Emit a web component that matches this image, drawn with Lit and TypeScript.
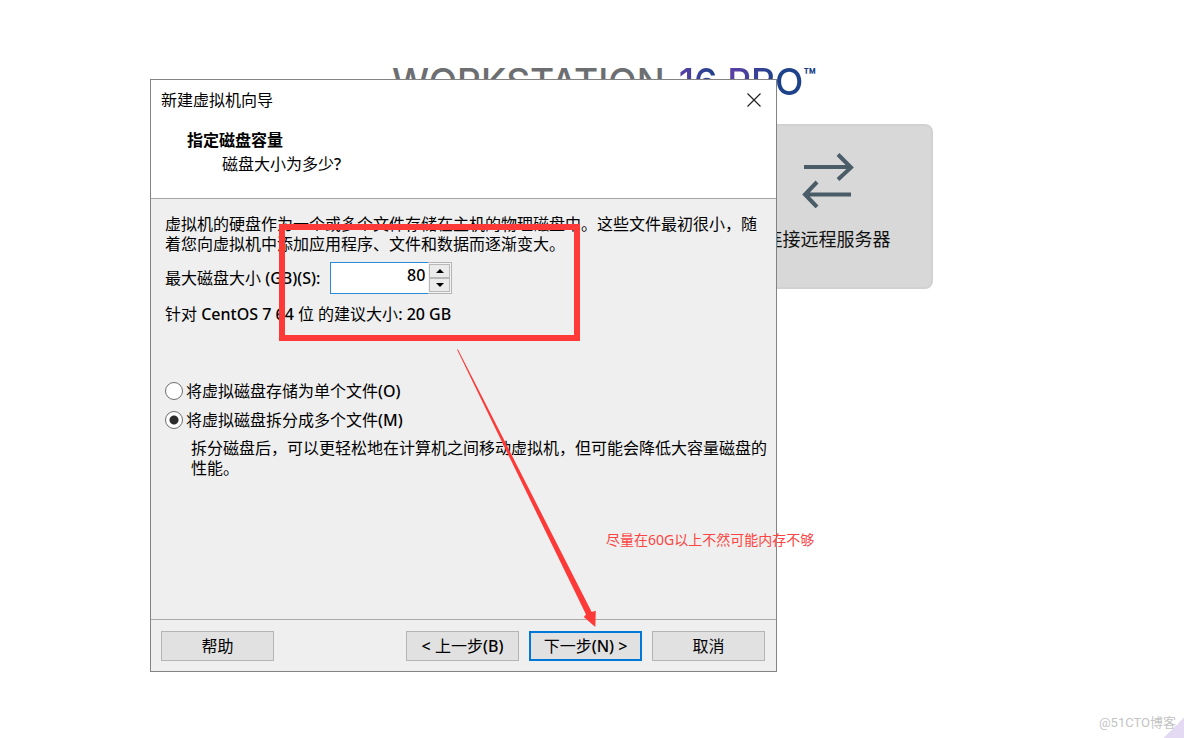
import { LitElement, html, css, svg } from "lit";
import { customElement, state } from "lit/decorators.js";

@customElement("workstation-home")
class WorkstationHome extends LitElement {
  static styles = css`
    :host {
      display: block;
      padding: 58px 0 0 24px;
    }
    .stage {
      display: flex;
      flex-direction: column;
      align-items: center;
      gap: 18px;
    }
    .logo {
      display: flex;
      align-items: flex-start;
      gap: 14px;
      margin: 0;
      font: 500 37px/48px Inter, sans-serif;
      color: #6d6e71;
      white-space: nowrap;
    }
    .edition {
      display: flex;
      align-items: flex-start;
    }
    .grad {
      background: linear-gradient(90deg, #5a3fa5, #1d428a 30%, #5a3fa5 42%, #1d428a 80%);
      background-clip: text;
      -webkit-background-clip: text;
      color: transparent;
    }
    .tm {
      font-size: 20px;
      font-weight: 700;
      line-height: 36px;
      color: #1d428a;
    }
    .tiles {
      display: flex;
      justify-content: flex-end;
      width: 100%;
      max-width: 657px;
    }
    .tile {
      display: flex;
      flex-direction: column;
      align-items: center;
      gap: 16px;
      width: 210px;
      height: 165px;
      padding: 24px 0 0;
      border: 2px solid #d1d1d1;
      border-radius: 8px;
      background: #d8d8d8;
      color: #111;
      font: 18px/28px "Noto Sans CJK SC", sans-serif;
    }
  `;
  render() {
    return html`
      <div class="stage">
        <h1 class="logo">
          <span>WORKSTATION</span>
          <span class="edition"><span class="grad">16 PRO</span><span class="tm">™</span></span>
        </h1>
        <div class="tiles">
          <button class="tile">
            <svg width="52" height="58" viewBox="0 0 52 58" fill="none" stroke="#4a5c68" stroke-width="4">
              <path d="M2 17H49M36 4.500L49 17.500L36 29.500M49 44.500H3M15 32L3 44.500L15 57" />
            </svg>
            <span>连接远程服务器</span>
          </button>
        </div>
      </div>
    `;
  }
}

@customElement("disk-wizard")
class DiskWizard extends LitElement {
  @state() private size = 80;
  @state() private mode = "split";

  static styles = css`
    :host {
      display: flex;
      flex-direction: column;
      box-sizing: border-box;
      border: 1px solid #838383;
      background: #efefef;
      color: #000;
      font: 16px/20px "Noto Sans", "Noto Sans CJK SC", sans-serif;
    }
    * {
      box-sizing: border-box;
    }
    h2,
    h3,
    p {
      margin: 0;
      font-size: 16px;
      font-weight: 400;
    }
    b {
      font-weight: 500;
    }
    .head {
      padding: 10px 11px 24px 10px;
      background: #fff;
      border-bottom: 1px solid #a5a5a5;
    }
    .bar {
      display: flex;
      justify-content: space-between;
      align-items: center;
      height: 20px;
    }
    .close {
      display: flex;
      padding: 2px;
      border: 0;
      background: none;
    }
    .head h3 {
      padding: 20px 0 0 26px;
      font-weight: 700;
    }
    .head p {
      padding: 4px 0 0 61px;
    }
    .body {
      padding: 15px 8px 141px 14px;
    }
    .row {
      display: flex;
      align-items: center;
      gap: 10px;
      padding: 8px 0 10px;
    }
    .spin {
      display: flex;
      width: 122px;
      height: 32px;
    }
    .spin input {
      flex: 1;
      min-width: 0;
      padding: 0 3px 6px;
      border: 1px solid #2b8ad6;
      border-right: 0;
      border-radius: 0;
      outline: 0;
      background: #fff;
      color: #000;
      font: inherit;
      font-weight: 500;
      text-align: right;
    }
    .arrows {
      display: flex;
      flex-direction: column;
      width: 24px;
      padding: 1px;
      border: 1px solid #b4b4b4;
      border-left: 0;
      background: #f4f4f4;
    }
    .arrows button {
      display: flex;
      flex: 1;
      align-items: center;
      justify-content: center;
      padding: 0;
      border: 1px solid #b8b8b8;
      background: #ebebeb;
    }
    .options {
      display: flex;
      flex-direction: column;
      gap: 9px;
      padding-top: 57px;
    }
    .options label {
      display: flex;
      align-items: center;
      gap: 3px;
    }
    .options input {
      appearance: none;
      width: 18px;
      height: 18px;
      margin: 0;
      border: 1px solid #6e6e6e;
      border-radius: 50%;
      background: #fff;
    }
    .options input:checked {
      background: radial-gradient(circle, #2b2b2b 4px, #fff 5px);
    }
    .hint {
      padding: 8px 0 0 26px;
    }
    .foot {
      display: flex;
      gap: 10px;
      padding: 11px 11px 10px 10px;
      border-top: 1px solid #a9a9a9;
    }
    .foot button {
      width: 113px;
      height: 30px;
      padding: 0;
      border: 1px solid #b4b4b4;
      background: #e1e1e1;
      color: #000;
      font: inherit;
    }
    .foot .help {
      margin-right: auto;
    }
    .foot .next {
      border: 2px solid #0078d7;
    }
  `;
  private arrow(d: string) {
    return html`<svg width="8" height="4" viewBox="0 0 8 4">${svg`<path d=${d} />`}</svg>`;
  }
  render() {
    return html`
      <div class="head">
        <div class="bar">
          <h2>新建虚拟机向导</h2>
          <button class="close" aria-label="关闭">
            <svg width="18" height="18" viewBox="0 0 18 18" stroke="#222" stroke-width="1.200">
              <path d="M2.500 2.500L15.500 15.500M15.500 2.500L2.500 15.500" />
            </svg>
          </button>
        </div>
        <h3>指定磁盘容量</h3>
        <p>磁盘大小为多少<b>?</b></p>
      </div>
      <div class="body">
        <p>虚拟机的硬盘作为一个或多个文件存储在主机的物理磁盘中。这些文件最初很小，随着您向虚拟机中添加应用程序、文件和数据而逐渐变大。</p>
        <div class="row">
          <label for="size">最大磁盘大小 <b>(GB)(S):</b></label>
          <div class="spin">
            <input id="size" type="text" inputmode="numeric" .value=${String(this.size)}
              @change=${(e: Event) => (this.size = Number((e.target as HTMLInputElement).value) || 1)} />
            <div class="arrows">
              <button aria-label="增加" @click=${() => this.size++}>${this.arrow("M0 4L4 0L8 4Z")}</button>
              <button aria-label="减少" @click=${() => (this.size = Math.max(1, this.size - 1))}>${this.arrow("M0 0L4 4L8 0Z")}</button>
            </div>
          </div>
        </div>
        <p>针对 <b>CentOS 7 64</b> 位 的建议大小<b>: 20 GB</b></p>
        <div class="options">
          <label>
            <input type="radio" name="mode" ?checked=${this.mode === "single"} @change=${() => (this.mode = "single")} />
            <span>将虚拟磁盘存储为单个文件<b>(O)</b></span>
          </label>
          <label>
            <input type="radio" name="mode" ?checked=${this.mode === "split"} @change=${() => (this.mode = "split")} />
            <span>将虚拟磁盘拆分成多个文件<b>(M)</b></span>
          </label>
        </div>
        <p class="hint">拆分磁盘后，可以更轻松地在计算机之间移动虚拟机，但可能会降低大容量磁盘的性能。</p>
      </div>
      <div class="foot">
        <button class="help">帮助</button>
        <button><b>&lt;</b> 上一步<b>(B)</b></button>
        <button class="next">下一步<b>(N) &gt;</b></button>
        <button>取消</button>
      </div>
    `;
  }
}

@customElement("app-root")
class AppRoot extends LitElement {
  static styles = css`
    :host {
      display: block;
      position: relative;
      min-height: 100vh;
      overflow: hidden;
      background: #fff;
    }
    .wizard {
      position: absolute;
      left: 150px;
      top: 79px;
      width: 627px;
    }
    .frame {
      position: absolute;
      left: 279px;
      top: 224px;
      width: 301px;
      height: 117px;
      box-sizing: border-box;
      border: 6px solid #fd3a38;
    }
    .pointer {
      position: absolute;
      left: 450px;
      top: 340px;
    }
    .note {
      position: absolute;
      left: 606px;
      top: 530px;
      color: #fc4442;
      font: 14px/20px "Noto Sans", "Noto Sans CJK SC", sans-serif;
      white-space: nowrap;
    }
    .mark {
      position: absolute;
      right: 8px;
      bottom: 5px;
      color: #c4c4c4;
      font: 13px/20px Roboto, "Noto Sans CJK SC", sans-serif;
    }
    .corner {
      position: absolute;
      right: 0;
      bottom: 0;
      width: 20px;
      height: 20px;
      background: linear-gradient(135deg, transparent 50%, #e4daf3 50%);
    }
  `;
  render() {
    return html`
      <workstation-home></workstation-home>
      <disk-wizard class="wizard"></disk-wizard>
      <div class="frame"></div>
      <svg class="pointer" width="160" height="300" viewBox="450 340 160 300" fill="#fd3a38">
        <path d="M457 349.500L458 349.500L591.700 612L595.800 610.700L595.300 627L583.800 617L586 614.500Z" />
      </svg>
      <div class="note">尽量在60G以上不然可能内存不够</div>
      <div class="corner"></div>
      <div class="mark">@51CTO博客</div>
    `;
  }
}
